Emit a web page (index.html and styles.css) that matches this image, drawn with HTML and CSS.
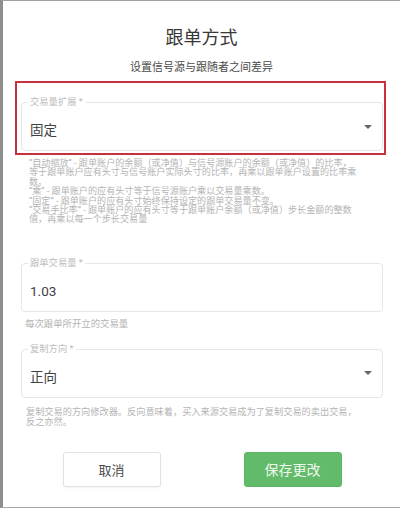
FILE: index.html
```html
<!DOCTYPE html>
<html lang="zh">
<head>
<meta charset="utf-8">
<link rel="stylesheet" href="styles.css">
</head>
<body>
<div class="frame">
  <h1 class="title">跟单方式</h1>
  <p class="subtitle">设置信号源与跟随者之间差异</p>
  <div class="form">
    <div class="highlight">
      <div class="field">
        <span class="field-label">交易量扩展 *</span>
        <span class="field-value">固定</span>
        <span class="caret"></span>
      </div>
    </div>
    <p class="help help-long">“自动缩放” - 跟单账户的余额（或净值）与信号源账户的余额（或净值）的比率，<br>等于跟单账户应有头寸与信号账户实际头寸的比率，再乘以跟单账户设置的比率乘<br>数。<br>“乘” - 跟单账户的应有头寸等于信号源账户乘以交易量乘数。<br>“固定” - 跟单账户的应有头寸始终保持设定的跟单交易量不变。<br>“交易手比率” - 跟单账户的应有头寸等于跟单账户余额（或净值）步长金额的整数<br>值，再乘以每一个步长交易量</p>

    <div class="field field-second">
      <span class="field-label">跟单交易量 *</span>
      <span class="field-value">1.03</span>
    </div>
    <p class="help help-short">每次跟单所开立的交易量</p>

    <div class="field field-third">
      <span class="field-label">复制方向 *</span>
      <span class="field-value">正向</span>
      <span class="caret"></span>
    </div>
    <p class="help help-dir">复制交易的方向修改器。反向意味着，买入来源交易成为了复制交易的卖出交易，<br>反之亦然。</p>
  </div>
  <div class="actions">
    <button class="btn btn-cancel">取消</button>
    <button class="btn btn-save">保存更改</button>
  </div>
</div>
</body>
</html>
```
FILE: styles.css
```css
html, body {
  margin: 0;
  padding: 0;
  background: #ffffff;
}
body {
  font-family: Roboto, "Noto Sans CJK SC", sans-serif;
  color: #333333;
}
.frame {
  box-sizing: border-box;
  height: 508px;
  width: 400px;
  border-top: 1px solid #a0a0a0;
  border-bottom: 1px solid #a8a8a8;
  border-left: 3px solid #8e8e8e;
  overflow: hidden;
}
.title {
  margin: 25px 0 0 0;
  font-size: 18px;
  line-height: 24px;
  font-weight: 400;
  text-align: center;
  color: #383838;
}
.subtitle {
  margin: 11px 0 0 0;
  font-size: 11px;
  line-height: 14px;
  text-align: center;
  color: #4a4a4a;
}
.form {
  padding: 0 17px 0 18px;
}
.highlight {
  margin: 6px -3px 0 -6px;
  border: 2px solid #c8303e;
  padding: 19px 1px 2px 4px;
}
.field {
  position: relative;
  box-sizing: border-box;
  height: 49px;
  border: 1px solid #e6e6e6;
  border-radius: 4px;
  display: flex;
  align-items: center;
  padding: 0 10px 0 8px;
}
.field-label {
  position: absolute;
  top: -6px;
  left: 6px;
  padding: 0 2px;
  background: #ffffff;
  font-size: 9.3px;
  line-height: 10px;
  color: #bdbdbd;
}
.field-value {
  flex: 1;
  margin-top: 7px;
  font-size: 13.5px;
  line-height: 18px;
  color: #404040;
}
.caret {
  width: 0;
  height: 0;
  border-left: 4px solid transparent;
  border-right: 4px solid transparent;
  border-top: 4px solid #666666;
}
.help {
  margin: 0;
  color: #b4b4b4;
  white-space: nowrap;
}
.help-long {
  margin-top: 4px;
  padding-left: 8px;
  font-size: 9.1px;
  line-height: 9.4px;
}
.field-second {
  margin-top: 38px;
}
.help-short {
  margin-top: 6px;
  padding-left: 4px;
  font-size: 9.4px;
  line-height: 12px;
}
.field-third {
  margin-top: 19px;
}
.help-dir {
  margin-top: 9px;
  padding-left: 5px;
  font-size: 9.2px;
  line-height: 10px;
}
.actions {
  display: flex;
  justify-content: center;
  gap: 83px;
  margin-top: 25px;
  padding-left: 1px;
}
.btn {
  box-sizing: border-box;
  width: 98px;
  height: 35px;
  border-radius: 3px;
  font-family: Roboto, "Noto Sans CJK SC", sans-serif;
  font-size: 13px;
  cursor: pointer;
}
.btn-cancel {
  background: #ffffff;
  border: 1px solid #e2e2e2;
  color: #4a4a4a;
  box-shadow: 0 1px 2px rgba(0, 0, 0, 0.06);
}
.btn-save {
  background: #62bb6a;
  border: 1px solid #5db565;
  color: #eef8ee;
  font-size: 14px;
}
```
